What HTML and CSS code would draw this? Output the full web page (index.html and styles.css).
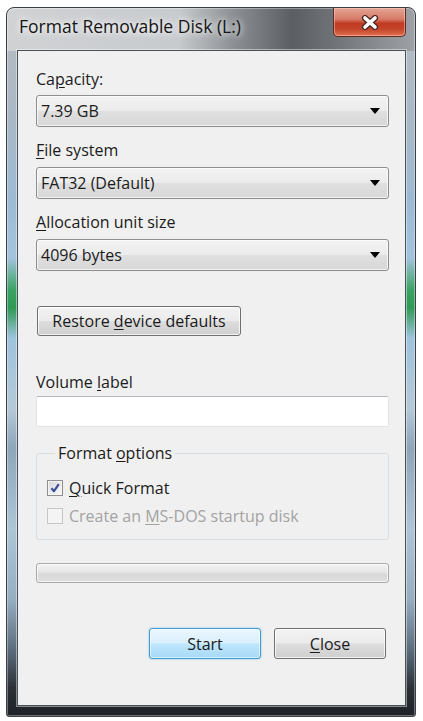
FILE: index.html
```html
<!DOCTYPE html>
<html lang="en">
<head>
<meta charset="utf-8">
<title>Format Removable Disk (L:)</title>
<link rel="stylesheet" href="styles.css">
</head>
<body>
<div class="window">
  <div class="titlebar">
    <div class="title">Format Removable Disk (L:)</div>
    <div class="close-x" aria-label="Close">
      <svg width="18" height="15" viewBox="0 0 18 15">
        <path d="M4 3 L14 12 M14 3 L4 12" stroke="#4b2b25" stroke-width="6.2" stroke-linecap="round"/>
        <path d="M4 3 L14 12 M14 3 L4 12" stroke="#ffffff" stroke-width="3.6" stroke-linecap="round"/>
      </svg>
    </div>
  </div>
  <div class="client">
    <div class="label">Ca<u>p</u>acity:</div>
    <div class="combo"><span>7.39 GB</span><svg class="arrow" width="10" height="6" viewBox="0 0 10 6"><polygon points="0,0 10,0 5,6" fill="#000"/></svg></div>
    <div class="label after-combo"><u>F</u>ile system</div>
    <div class="combo"><span>FAT32 (Default)</span><svg class="arrow" width="10" height="6" viewBox="0 0 10 6"><polygon points="0,0 10,0 5,6" fill="#000"/></svg></div>
    <div class="label after-combo"><u>A</u>llocation unit size</div>
    <div class="combo"><span>4096 bytes</span><svg class="arrow" width="10" height="6" viewBox="0 0 10 6"><polygon points="0,0 10,0 5,6" fill="#000"/></svg></div>
    <div class="btn restore"><span>Restore <u>d</u>evice defaults</span></div>
    <div class="label volume">Volume <u>l</u>abel</div>
    <div class="textbox"></div>
    <fieldset class="group">
      <legend>Format <u>o</u>ptions</legend>
      <div class="check-row">
        <span class="cb">
          <svg width="14" height="14" viewBox="0 0 14 14"><path d="M3.5 7.2 L6 10.2 L10.8 3.2" stroke="#3d4f9e" stroke-width="2.2" fill="none" stroke-linejoin="round"/></svg>
        </span>
        <span><u>Q</u>uick Format</span>
      </div>
      <div class="check-row disabled">
        <span class="cb"></span>
        <span>Create an <u>M</u>S-DOS startup disk</span>
      </div>
    </fieldset>
    <div class="progress"></div>
    <div class="actions">
      <div class="btn start"><span>Start</span></div>
      <div class="btn close"><span><u>C</u>lose</span></div>
    </div>
  </div>
</div>
</body>
</html>
```
FILE: styles.css
```css
html, body {
  margin: 0;
  padding: 0;
  background: #ffffff;
}

body {
  font-family: "Open Sans", "Noto Sans", sans-serif;
  font-size: 16px;
  color: #1b1b1b;
}

u {
  text-decoration: underline;
  text-decoration-thickness: 1px;
  text-underline-offset: 2px;
}

.window {
  box-sizing: border-box;
  margin: 7px 7px 4px 6px;
  height: 710px;
  display: flex;
  flex-direction: column;
  border: 1px solid #3b4046;
  border-radius: 8px 8px 3px 3px;
  padding: 0 9px 10px 10px;
  background:
    linear-gradient(90deg, #d0d2d4 0%, #c8cbce 42%, #8a8e92 56%, #5b5f64 70%, #6f7378 80%, #9ea2a6 100%) top left / 100% 43px no-repeat,
    linear-gradient(180deg, #b7bcc1 0px, #aab8c6 110px, #9dbad3 190px, #a3c3dc 250px, #3aa363 282px, #2f9a55 300px, #9ec3dc 330px, #b5c9d8 400px, #8fa6b9 440px, #aec5d6 520px, #98afc2 590px, #5f6f80 640px, #2b3137 680px, #1e2227 710px);
  box-shadow: inset 0 0 0 1px rgba(255, 255, 255, 0.35);
}

.titlebar {
  height: 42px;
  display: flex;
  justify-content: space-between;
  align-items: flex-start;
}

.title {
  margin: 8px 0 0 2px;
  font-size: 17.5px;
  line-height: 20px;
  color: #151515;
  text-shadow: 0 0 6px #ffffff, 0 0 10px rgba(255, 255, 255, 0.8);
}

.close-x {
  box-sizing: border-box;
  width: 73px;
  height: 29px;
  display: flex;
  align-items: center;
  justify-content: center;
  border: 1px solid #5e2a22;
  border-top: none;
  border-radius: 0 0 5px 5px;
  background: linear-gradient(180deg, #e4a595 0%, #d77a66 40%, #c03a22 55%, #c4442a 75%, #e0704e 100%);
  box-shadow: inset 0 0 0 1px rgba(255, 220, 210, 0.45);
}

.client {
  flex: 1;
  display: flex;
  flex-direction: column;
  border: 1px solid #4a5057;
  background: #f0f0f0;
  padding: 18px 16px 0 18px;
  box-shadow: 0 0 0 1px rgba(255, 255, 255, 0.45);
}

.label {
  line-height: 20px;
}

.after-combo {
  margin-top: 13px;
}

.combo {
  box-sizing: border-box;
  height: 32px;
  margin-top: 6px;
  display: flex;
  align-items: center;
  justify-content: space-between;
  padding: 0 8px 0 4px;
  border: 1px solid #8d8e8f;
  border-radius: 3px;
  background: linear-gradient(180deg, #f3f3f3 0%, #ececec 48%, #dfdfdf 52%, #d8d8d8 100%);
  box-shadow: inset 0 0 0 1px rgba(255, 255, 255, 0.7);
}

.after-combo + .combo {
  margin-top: 7px;
}

.btn {
  box-sizing: border-box;
  display: flex;
  align-items: center;
  justify-content: center;
  border: 1px solid #707070;
  border-radius: 3px;
  background: linear-gradient(180deg, #f2f2f2 0%, #ebebeb 48%, #dddddd 52%, #cfcfcf 100%);
  box-shadow: inset 0 0 0 1px rgba(255, 255, 255, 0.75);
  line-height: 20px;
}

.restore {
  align-self: flex-start;
  width: 204px;
  height: 30px;
  margin: 35px 0 0 1px;
}

.volume {
  margin-top: 36px;
}

.textbox {
  height: 31px;
  box-sizing: border-box;
  margin-top: 4px;
  background: #ffffff;
  border: 1px solid #e0e4e9;
  border-top-color: #b5b9bf;
  border-radius: 2px;
}

.group {
  margin: 16px 0 0;
  padding: 15px 10px 13px;
  border: 1px solid #d6dde3;
  border-radius: 3px;
  min-width: 0;
}

.group legend {
  margin-left: 8px;
  padding: 0 3px;
  line-height: 20px;
}

.check-row {
  display: flex;
  align-items: center;
  gap: 6px;
  line-height: 20px;
}

.check-row + .check-row {
  margin-top: 8px;
}

.cb {
  box-sizing: border-box;
  width: 16px;
  height: 16px;
  display: flex;
  align-items: center;
  justify-content: center;
  border: 1px solid #8f8f8f;
  background: linear-gradient(135deg, #d6d6d6 0%, #ececec 55%, #fafafa 100%);
  box-shadow: inset 0 0 0 1px #f4f4f4;
}

.disabled {
  color: #a3a3a3;
}

.disabled .cb {
  border-color: #c6c6c6;
  background: #f4f4f4;
  box-shadow: none;
}

.progress {
  box-sizing: border-box;
  height: 20px;
  margin-top: 23px;
  border: 1px solid #a9a9a9;
  border-radius: 3px;
  background: linear-gradient(180deg, #f2f2f2 0%, #e6e6e6 45%, #d8d8d8 55%, #dedede 100%);
  box-shadow: inset 0 0 0 1px rgba(255, 255, 255, 0.7);
}

.actions {
  display: flex;
  justify-content: flex-end;
  gap: 13px;
  margin: 45px 3px 0 0;
}

.actions .btn {
  width: 112px;
  height: 31px;
}

.start {
  border-color: #3c9bd0;
  background: linear-gradient(180deg, #eaf6fd 0%, #d9f0fc 48%, #bee6fd 52%, #a7d9f5 100%);
  box-shadow: inset 0 0 0 1px rgba(255, 255, 255, 0.6), 0 0 2px rgba(60, 155, 208, 0.6);
}
```
